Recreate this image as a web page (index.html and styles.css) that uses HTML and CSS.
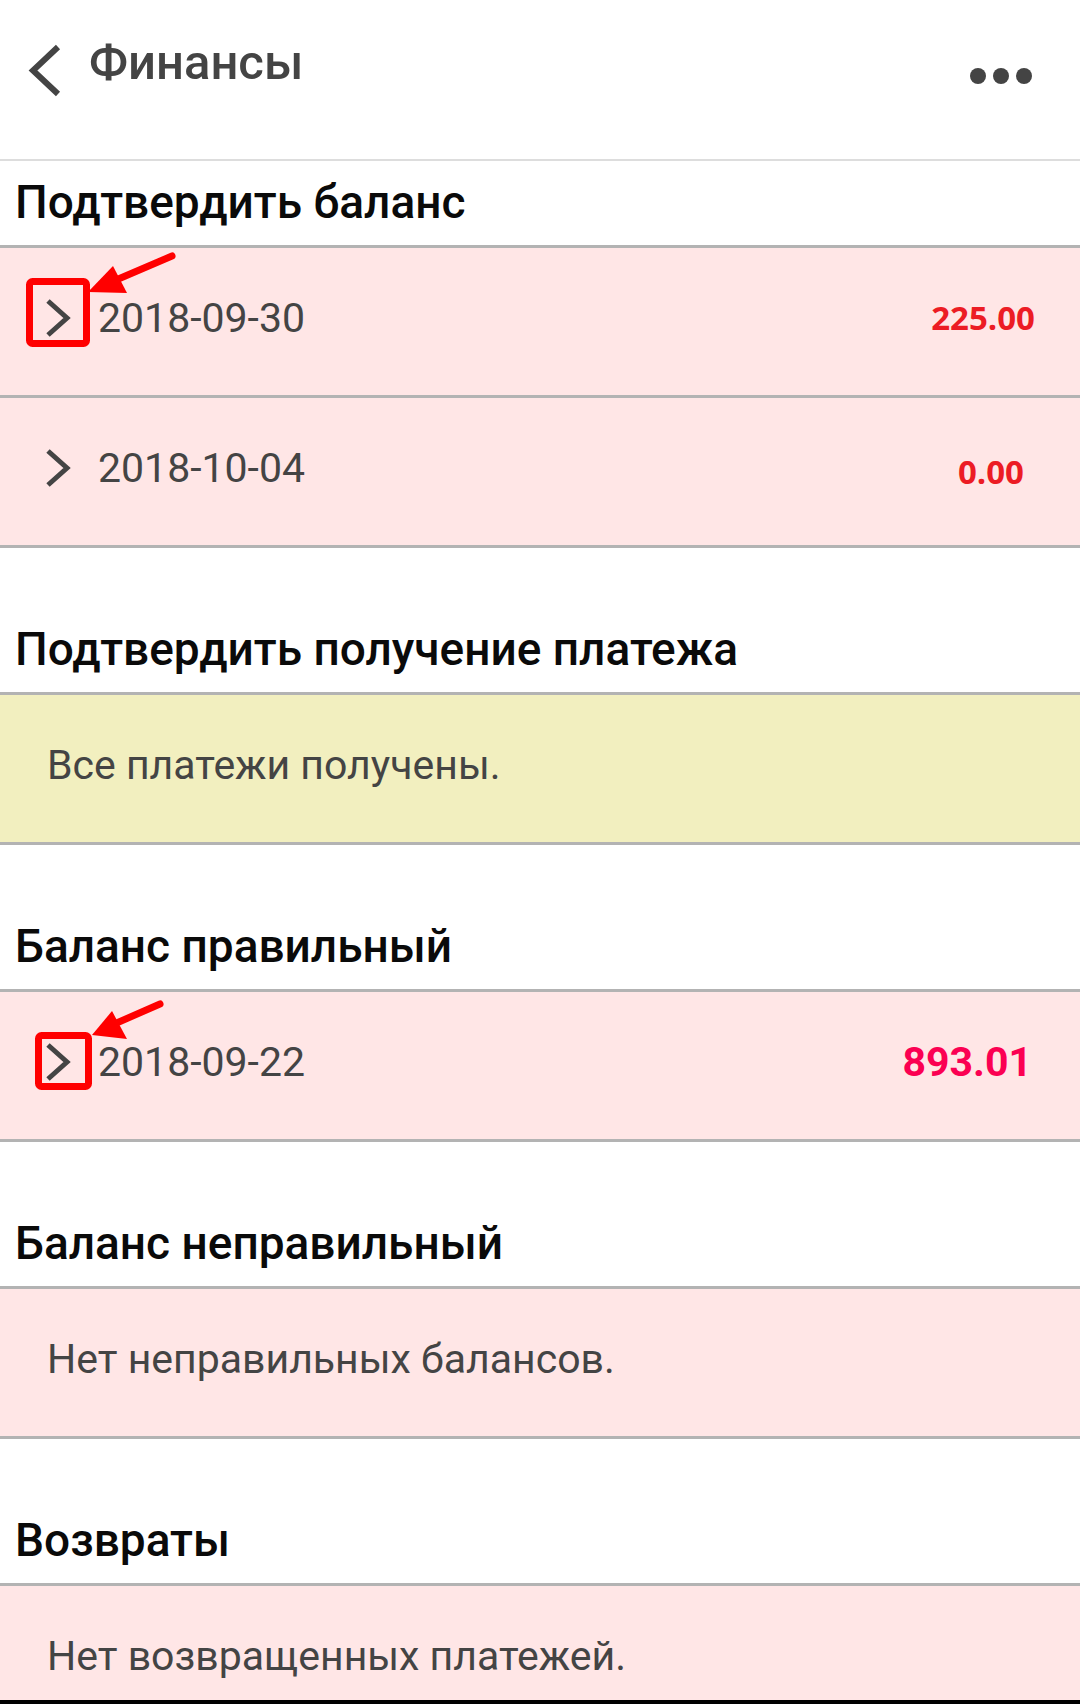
FILE: index.html
```html
<!DOCTYPE html>
<html lang="ru">
<head>
<meta charset="utf-8">
<title>Финансы</title>
<link rel="stylesheet" href="styles.css">
</head>
<body>
<header class="topbar">
  <svg class="back" width="40" height="60" viewBox="0 0 40 60"><path d="M34 7 L9 30.5 L34 54" fill="none" stroke="#444" stroke-width="6"/></svg>
  <h1 class="title">Финансы</h1>
  <svg class="more" width="62" height="16" viewBox="0 0 62 16"><circle cx="8" cy="8" r="8" fill="#444"/><circle cx="31" cy="8" r="8" fill="#444"/><circle cx="54" cy="8" r="8" fill="#444"/></svg>
</header>

<section class="section first">
  <h2 class="section-title">Подтвердить баланс</h2>
  <div class="row">
    <svg class="chev" width="28" height="40" viewBox="0 0 28 40"><path d="M4 3 L23 20 L4 37" fill="none" stroke="#444" stroke-width="5"/></svg>
    <span class="date">2018-09-30</span>
    <span class="amount amount-os a1">225.00</span>
    <svg class="annot" width="200" height="110" viewBox="0 0 200 110">
      <rect x="29.5" y="33.5" width="57" height="62" rx="3" fill="none" stroke="#ff0000" stroke-width="7"/>
      <path d="M172 8 L116 32" stroke="#ff0000" stroke-width="7" stroke-linecap="round"/>
      <path d="M88 44 L113 18 L127 45 Z" fill="#ff0000"/>
    </svg>
  </div>
  <div class="row">
    <svg class="chev" width="28" height="40" viewBox="0 0 28 40"><path d="M4 3 L23 20 L4 37" fill="none" stroke="#444" stroke-width="5"/></svg>
    <span class="date">2018-10-04</span>
    <span class="amount amount-os a2">0.00</span>
  </div>
</section>

<section class="section">
  <h2 class="section-title">Подтвердить получение платежа</h2>
  <div class="empty yellow">Все платежи получены.</div>
</section>

<section class="section">
  <h2 class="section-title">Баланс правильный</h2>
  <div class="row">
    <svg class="chev" width="28" height="40" viewBox="0 0 28 40"><path d="M4 3 L23 20 L4 37" fill="none" stroke="#444" stroke-width="5"/></svg>
    <span class="date">2018-09-22</span>
    <span class="amount amount-rb a3">893.01</span>
    <svg class="annot" width="200" height="110" viewBox="0 0 200 110">
      <rect x="38.5" y="43.5" width="50" height="51" rx="3" fill="none" stroke="#ff0000" stroke-width="7"/>
      <path d="M160 12 L112 33" stroke="#ff0000" stroke-width="7" stroke-linecap="round"/>
      <path d="M92 43 L112 19 L127 47 Z" fill="#ff0000"/>
    </svg>
  </div>
</section>

<section class="section">
  <h2 class="section-title">Баланс неправильный</h2>
  <div class="empty">Нет неправильных балансов.</div>
</section>

<section class="section">
  <h2 class="section-title">Возвраты</h2>
  <div class="empty">Нет возвращенных платежей.</div>
</section>

<div class="bottom-bar"></div>
</body>
</html>
```

FILE: styles.css
```css
html, body {
  margin: 0;
  padding: 0;
}
body {
  width: 1080px;
  height: 1704px;
  overflow: hidden;
  background: #ffffff;
  font-family: Roboto, "Noto Sans", sans-serif;
  color: #444444;
}

.topbar {
  display: flex;
  align-items: flex-start;
  height: 159px;
  border-bottom: 2px solid #dddddd;
}
.back {
  display: block;
  margin-left: 24px;
  margin-top: 40px;
  flex: none;
}
.title {
  margin: 35px 0 0 25px;
  font-size: 49px;
  line-height: 56px;
  font-weight: 500;
  color: #444444;
}
.more {
  display: block;
  margin-left: auto;
  margin-right: 48px;
  margin-top: 68px;
  flex: none;
}

.section {
  margin-top: 60px;
}
.section.first {
  margin-top: 0;
}
.section-title {
  margin: 0;
  height: 87px;
  box-sizing: border-box;
  padding: 16px 15px 0;
  font-size: 46px;
  line-height: 50px;
  font-weight: 500;
  color: #0a0a0a;
  border-bottom: 3px solid #b3b3b3;
}

.row {
  position: relative;
  display: flex;
  align-items: center;
  height: 139px;
  padding: 0 0 8px 44px;
  background: #ffe6e6;
  border-bottom: 3px solid #b3b3b3;
}
.chev {
  display: block;
  flex: none;
}
.date {
  margin-left: 26px;
  font-size: 41px;
  line-height: 48px;
  color: #444444;
}
.amount {
  margin-left: auto;
  font-weight: 700;
}
.amount-os {
  font-family: "Open Sans", sans-serif;
  font-size: 33px;
  line-height: 40px;
  color: #ec1c24;
}
.amount-rb {
  font-family: Roboto, sans-serif;
  font-size: 41px;
  line-height: 48px;
  color: #fb0052;
}
.a1 { margin-right: 45px; }
.a2 { margin-right: 56px; padding-top: 9px; }
.a3 { margin-right: 48px; }

.annot {
  position: absolute;
  left: 0;
  top: 0;
  pointer-events: none;
}

.empty {
  display: flex;
  align-items: center;
  height: 139px;
  padding: 0 0 8px 47px;
  font-size: 41px;
  line-height: 48px;
  color: #444444;
  background: #ffe6e6;
  border-bottom: 3px solid #b3b3b3;
}
.empty.yellow {
  background: #f2efbf;
}

.bottom-bar {
  position: fixed;
  left: 0;
  right: 0;
  bottom: 0;
  height: 4px;
  background: #000000;
}
```
